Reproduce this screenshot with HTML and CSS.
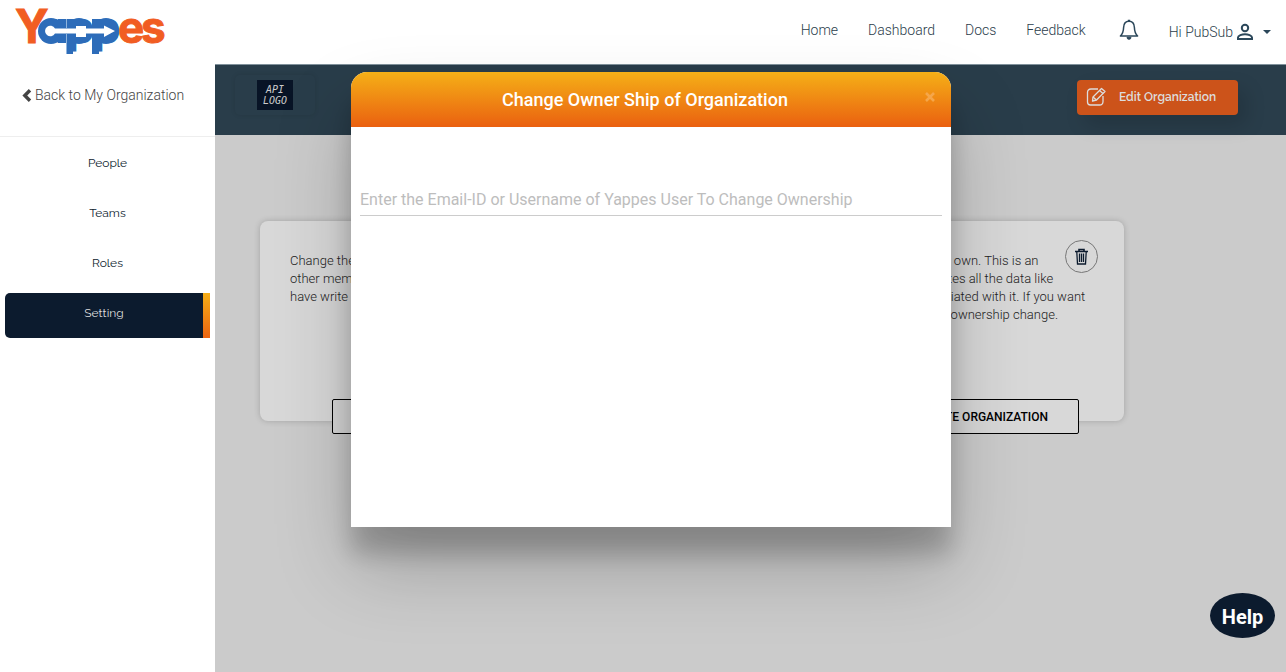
FILE: index.html
```html
<!DOCTYPE html>
<html lang="en">
<head>
<meta charset="utf-8">
<meta name="viewport" content="width=device-width, initial-scale=1">
<title>Yappes – Organization Setting</title>
<link rel="stylesheet" href="styles.css">
</head>
<body>
<header class="topbar">
  <a class="brand" href="#" aria-label="Yappes">
    <svg width="152" height="60" viewBox="14 0 152 60" aria-hidden="true">
      <text class="brand-letters" y="43" x="15 41 67 93 118 141"><tspan class="brand-y">Y</tspan><tspan class="brand-blue">app</tspan><tspan>es</tspan></text>
      <g class="brand-blue">
        <circle cx="51" cy="31" r="13"/>
        <circle cx="79" cy="31" r="13"/>
        <circle cx="106" cy="31" r="13"/>
        <rect x="58" y="19" width="16" height="24"/>
        <rect x="92" y="19" width="7" height="35"/>
        <rect x="66" y="19" width="7" height="35"/>
      </g>
      <path class="brand-arrow" d="M55 28.500a5.300 5.300 0 1 0 0 5H76V37H86V33.500H104V37L115 31L104 25.500V28.500H86V26H76V28.500Z"/>
      <path class="brand-seam" d="M66.500 19v9M66.500 34v20"/>
    </svg>
  </a>
  <nav class="nav">
    <a href="#">Home</a>
    <a href="#">Dashboard</a>
    <a href="#">Docs</a>
    <a href="#">Feedback</a>
  </nav>
  <button class="bell" type="button" aria-label="Notifications">
    <svg width="20" height="22" viewBox="0 0 20 22" fill="none" stroke="currentColor" stroke-width="1.500">
      <path d="M10 2.200C6.300 2.200 4.700 5 4.600 8.500C4.500 12 4 14.500 1.400 17H18.600C16 14.500 15.500 12 15.400 8.500C15.300 5 13.700 2.200 10 2.200Z" stroke-linejoin="round"/>
      <path d="M8.800 1.500h2.400"/><path d="M8 18.300a2 2 0 0 0 4 0Z" fill="currentColor" stroke-width="1"/>
    </svg>
  </button>
  <button class="user" type="button">
    <span>Hi PubSub</span>
    <svg width="18" height="18" viewBox="0 0 18 18" fill="none" stroke="currentColor" stroke-width="2"><circle cx="9" cy="5" r="3.200"/><path d="M2 16V14.500C2 12.500 6 11.200 9 11.200S16 12.500 16 14.500V16Z"/></svg>
    <i class="caret"></i>
  </button>
</header>
<div class="shell">
  <aside class="sidebar">
    <a class="back" href="#">
      <svg width="10" height="13" viewBox="0 0 10 13" fill="none" stroke="currentColor" stroke-width="3.400"><path d="M8 1.300L2.800 6.500L8 11.700"/></svg>
      <span>Back to My Organization</span>
    </a>
    <nav class="menu">
      <a href="#">People</a>
      <a href="#">Teams</a>
      <a href="#">Roles</a>
      <a class="active" href="#" aria-current="page">Setting</a>
    </nav>
  </aside>
  <main class="content">
    <div class="banner">
      <div class="org-logo"><span>API<br>LOGO</span></div>
      <button class="edit" type="button">
        <svg width="20" height="20" viewBox="0 0 20 20" fill="none" stroke="currentColor" stroke-width="1.300" stroke-linejoin="round"><path d="M12 2H5Q1.500 2 1.500 5.500V15Q1.500 18 4.500 18H13.500Q17 18 17 14.500V9"/><path d="M7 10L15.500 1.500L19 4.500L10.500 13L6.500 14Z"/><path d="M7 10L10.500 13M13.500 3.500L17 6.500"/></svg>
        <span>Edit Organization</span>
      </button>
    </div>
    <div class="cards">
      <section class="card">
        <p>Change the ownership of the organization to any<br>other member of the organization. You should<br>have write access to change it.</p>
        <button class="action" type="button">CHANGE OWNERSHIP</button>
      </section>
      <section class="card card-delete">
        <p>You may delete this organization you own. This is an<br>irreversible action, and doing so deletes all the data like<br>the APIs, teams and members associated with it. If you want<br>to keep it, you can contact us for the ownership change.</p>
        <button class="trash" type="button" aria-label="Delete">
          <svg width="13" height="17" viewBox="0 0 13 17" fill="none" stroke="currentColor" stroke-width="1.300"><path d="M0 3.500H13M4 3V1.500H9V3" stroke-width="1.600"/><path d="M1.800 4L2.500 16H10.500L11.200 4M4.500 5.500V14M6.500 5.500V14M8.500 5.500V14"/></svg>
        </button>
        <button class="action" type="button">DELETE ORGANIZATION</button>
      </section>
    </div>
  </main>
</div>
<div class="modal" role="dialog" aria-modal="true" aria-labelledby="modal-title">
  <div class="modal-head">
    <h2 id="modal-title">Change Owner Ship of Organization</h2>
    <button class="close" type="button" aria-label="Close"><svg width="10" height="10" viewBox="0 0 10 10" stroke="currentColor" stroke-width="2.600"><path d="M1 1L9 9M9 1L1 9"/></svg></button>
  </div>
  <div class="modal-body">
    <input type="text" aria-label="Email-ID or Username" placeholder="Enter the Email-ID or Username of Yappes User To Change Ownership">
  </div>
</div>
<button class="help" type="button">Help</button>
</body>
</html>
```
FILE: styles.css
```css
* { box-sizing: border-box; }
body {
  margin: 0;
  min-height: 100vh;
  display: flex;
  flex-direction: column;
  font-family: Roboto, "Liberation Sans", sans-serif;
  color: #2b3d4b;
  background: #fff;
}
a { color: inherit; text-decoration: none; }
button { font-family: inherit; border: 0; background: none; padding: 0; color: inherit; }
svg { display: block; flex: none; overflow: visible; }

.topbar {
  display: flex;
  align-items: center;
  height: 64px;
  padding: 0 15px 0 14px;
}
.brand { margin: 0 auto 4px 0; }
.brand-letters { font: 700 44px Inter, sans-serif; fill: #f15d22; stroke: #f15d22; stroke-width: 1; }
.brand-y { font-size: 46px; }
.brand-blue { fill: #2d6cb9; stroke: none; }
.brand-arrow { fill: #fff; }
.brand-seam { stroke: #8fb4dd; stroke-width: 1; }
.nav { display: flex; gap: 30px; padding-bottom: 4px; font-size: 14px; font-weight: 300; }
.bell { margin: 0 30px 4px 33px; color: #2b475a; }
.user { display: flex; align-items: center; gap: 3px; padding-bottom: 1px; font-size: 14px; font-weight: 300; }
.user svg { color: #2b475a; }
.caret { margin-left: 6px; border: 4px solid transparent; border-top-color: #2b475a; border-bottom: 0; }

.shell { flex: 1; display: flex; }
.sidebar { flex: none; width: 215px; background: #fff; }
.back {
  display: flex;
  gap: 3px;
  align-items: center;
  height: 73px;
  padding: 0 0 10px 22px;
  border-bottom: 1px solid #eee;
  font-size: 14px;
  font-weight: 300;
  color: #444;
}
.menu { display: flex; flex-direction: column; gap: 5px; padding: 6px 5px; font-family: Raleway, Lato, sans-serif; font-size: 12px; }
.menu a { display: flex; justify-content: center; align-items: flex-start; height: 45px; padding-top: 12px; line-height: 16px; color: #0c1b2e; }
.menu .active {
  color: #ddd;
  background: linear-gradient(#f5ae17, #ec6411) right / 7px 100% no-repeat #0c1b2e;
  border-radius: 5px 0 0 5px;
  padding-right: 7px;
}

.content { flex: 1; min-width: 0; border-top: 1px solid #80919b; background: #cbcbcb; }
.banner {
  display: flex;
  justify-content: space-between;
  align-items: flex-start;
  height: 70px;
  padding: 10px 48px 0 20px;
  background: #293d4a;
}
.org-logo { display: grid; place-items: center; width: 80px; height: 40px; border-radius: 5px; box-shadow: 0 0 5px rgba(0, 0, 0, .1); }
.org-logo span {
  width: 36px;
  height: 30px;
  padding-top: 4px;
  background: #081426;
  color: #ccc;
  font: italic 10px/11px "DejaVu Sans Mono", monospace;
  text-align: center;
}
.edit {
  display: flex;
  align-items: center;
  gap: 13px;
  width: 161px;
  height: 35px;
  margin-top: 5px;
  padding: 0 0 1px 9px;
  border-radius: 4px;
  background: #cc531a;
  color: #ddd;
  font: 600 12px Raleway, Lato, sans-serif;
  box-shadow: 8px 10px 20px rgba(0, 0, 0, .15);
}
.cards { display: grid; grid-template-columns: 412px 412px; gap: 40px; padding: 86px 45px; }
.card {
  display: flex;
  flex-direction: column;
  align-items: center;
  justify-content: space-between;
  position: relative;
  height: 213px;
  padding: 31px 30px 0;
}
.card::before { content: ""; position: absolute; inset: 0 0 13px; border-radius: 8px; background: #d8d8d8; box-shadow: 0 0 6px rgba(0, 0, 0, .2); }
.card p { position: relative; align-self: flex-start; margin: 0; font-size: 13px; font-weight: 300; line-height: 18px; color: #222; }
.action { position: relative; width: 268px; height: 35px; border: 1px solid #000; border-radius: 2px; background: #d8d8d8; color: #000; font-size: 12px; font-weight: 500; }
.card-delete .action { align-self: flex-end; width: auto; margin-right: 15px; padding: 0 30px; }
.trash { position: absolute; top: 19px; right: 26px; display: grid; place-items: center; width: 33px; height: 33px; border: 1px solid #777; border-radius: 50%; color: #0c1b2e; }

.modal {
  position: fixed;
  top: 72px;
  left: 50%;
  width: 600px;
  margin-left: -292px;
  background: #fff;
  border-radius: 16px 16px 0 0;
  box-shadow: 0 27px 24px rgba(0, 0, 0, .2), 0 40px 77px rgba(0, 0, 0, .22);
}
.modal-head {
  position: relative;
  height: 55px;
  padding-right: 12px;
  border-radius: inherit;
  background: linear-gradient(#f5b017, #ea6010);
  color: #fff;
  text-align: center;
}
.modal-head h2 { margin: 0; font-size: 18px; font-weight: 500; line-height: 55px; }
.close { position: absolute; top: 20px; right: 16px; color: #f5a64a; }
.modal-body { height: 400px; padding: 58px 9px; }
.modal-body input { width: 100%; height: 31px; padding: 0 0 2px; border: 0; border-bottom: 1px solid #ccc; outline: 0; font: 400 16px Roboto, sans-serif; }
.modal-body input::placeholder { color: #bdbdbd; opacity: 1; }
.help { position: fixed; right: 11px; bottom: 34px; width: 65px; height: 45px; padding-top: 2px; border-radius: 50%; background: #0c1b2e; color: #fff; font-size: 20px; font-weight: 700; }
```
